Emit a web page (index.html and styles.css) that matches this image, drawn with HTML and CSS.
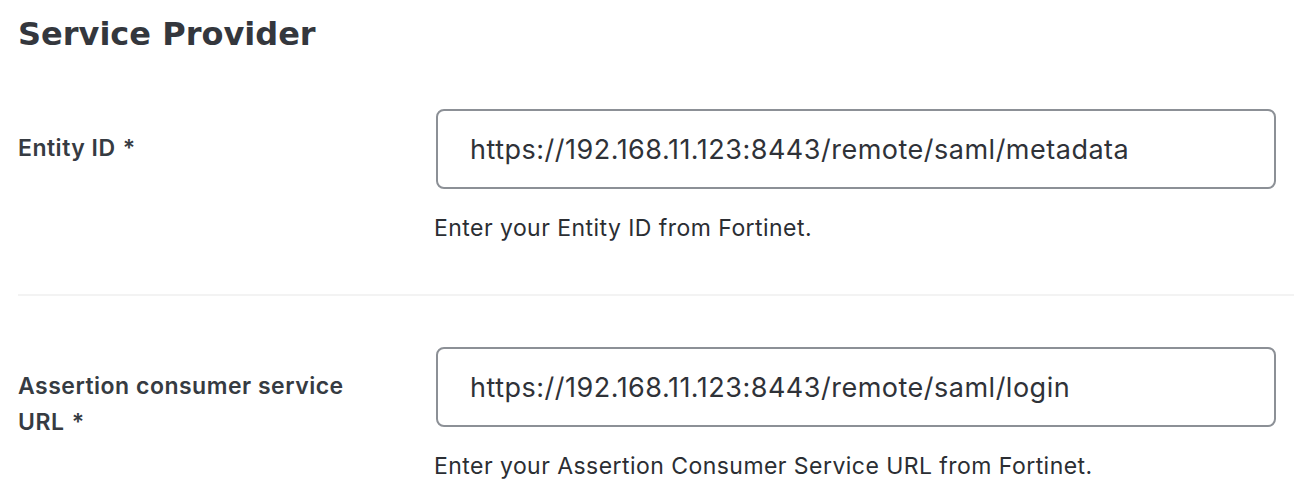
FILE: index.html
```html
<!DOCTYPE html>
<html>
<head>
  <title>Service Provider</title>
  <link rel="stylesheet" href="styles.css">
</head>
<body>
  <div class="section">
    <h2 class="section-title">Service Provider</h2>

    <div class="field-row">
      <label class="field-label" for="entity-id">Entity ID <span class="req">*</span></label>
      <div class="field-body">
        <input class="text-input" id="entity-id" type="text" value="https://192.168.11.123:8443/remote/saml/metadata">
        <p class="help">Enter your Entity ID from Fortinet.</p>
      </div>
    </div>

    <div class="field-row">
      <label class="field-label" for="acs-url">Assertion consumer service URL <span class="req">*</span></label>
      <div class="field-body">
        <input class="text-input" id="acs-url" type="text" value="https://192.168.11.123:8443/remote/saml/login">
        <p class="help">Enter your Assertion Consumer Service URL from Fortinet.</p>
      </div>
    </div>
  </div>
</body>
</html>
```

FILE: styles.css
```css
body {
  margin: 0;
  background-color: white;
  font-family: Inter, "Noto Sans", sans-serif;
  color: #2f3238;
}

.section {
  padding-left: 18px;
}

.section-title {
  margin: 0;
  padding-top: 14px;
  height: 44px;
  font-family: "DejaVu Sans", Inter, sans-serif;
  font-size: 32px;
  line-height: 40px;
  font-weight: 700;
  color: #34373d;
}

.field-row {
  display: flex;
  padding: 51px 0 50px;
  border-bottom: 2px solid #f3f3f3;
}

.field-row:last-child {
  border-bottom: none;
}

.field-label {
  width: 340px;
  margin-right: 78px;
  padding-top: 21px;
  font-size: 23px;
  line-height: 36px;
  font-weight: 600;
  letter-spacing: 0.5px;
  color: #363b42;
}

.req {
  margin-left: 1px;
}

.field-body {
  flex: 1;
  padding-right: 18px;
}

.text-input {
  display: block;
  box-sizing: border-box;
  width: 100%;
  height: 80px;
  margin: 0;
  padding: 0 32px;
  border: 2px solid #8c9096;
  border-radius: 8px;
  font-family: Inter, "Noto Sans", sans-serif;
  font-size: 27px;
  letter-spacing: 0.5px;
  color: #2f3238;
  background: white;
}

.help {
  margin: 23px 0 0 -2px;
  font-size: 23px;
  line-height: 32px;
  letter-spacing: 0.45px;
  color: #2b2e33;
}
```
